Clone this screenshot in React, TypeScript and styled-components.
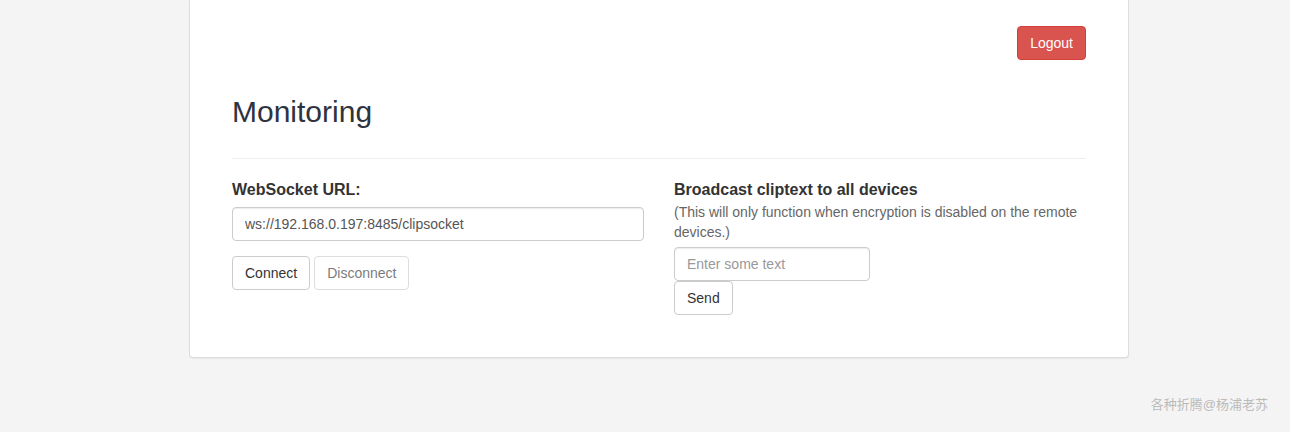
import React from "react";
import styled, { createGlobalStyle } from "styled-components";

const Global = createGlobalStyle`
  html, body { margin: 0; padding: 0; }
  body {
    background: #f4f4f4;
    font-family: "Liberation Sans", Arial, "Noto Sans CJK SC", sans-serif;
    font-size: 14px;
    line-height: 1.42857;
    color: #333;
  }
  * { box-sizing: border-box; }
`;

const Page = styled.div`
  display: flex;
  flex-direction: column;
  min-height: 432px;
`;

const Panel = styled.div`
  margin-left: 189px;
  width: 940px;
  background: #fff;
  border: 1px solid #ddd;
  border-top: none;
  border-radius: 0 0 4px 4px;
  box-shadow: 0 1px 1px rgba(0, 0, 0, 0.05);
  padding: 26px 42px 42px;
`;

const TopBar = styled.div`
  display: flex;
  justify-content: flex-end;
`;

const Title = styled.h2`
  margin: 35px 0 30px;
  font-size: 30px;
  font-weight: 400;
  line-height: 1.1;
  color: #2f3340;
`;

const Rule = styled.hr`
  margin: 20px 0;
  border: 0;
  border-top: 1px solid #eee;
`;

const Columns = styled.div`
  display: grid;
  grid-template-columns: 1fr 1fr;
  column-gap: 30px;
`;

const Column = styled.div`
  display: flex;
  flex-direction: column;
  align-items: flex-start;
`;

const Label = styled.label`
  font-size: 16px;
  font-weight: 700;
  line-height: 22.86px;
  margin-bottom: 5px;
`;

const Note = styled.p`
  margin: -5px 0 5px;
  line-height: 20px;
  color: #666;
`;

const Input = styled.input<{ $full?: boolean }>`
  display: block;
  width: ${(p) => (p.$full ? "100%" : "196px")};
  height: 34px;
  padding: 6px 12px;
  font: inherit;
  font-size: 14px;
  color: #555;
  background: #fff;
  border: 1px solid #ccc;
  border-radius: 4px;
  box-shadow: inset 0 1px 1px rgba(0, 0, 0, 0.075);
  outline: none;
  &::placeholder { color: #999; }
`;

const ButtonRow = styled.div<{ $top: number }>`
  display: flex;
  gap: 4px;
  margin-top: ${(p) => p.$top}px;
`;

const Button = styled.button<{ $variant?: "danger" | "default" }>`
  display: inline-block;
  height: 34px;
  padding: 6px 12px;
  font: inherit;
  font-size: 14px;
  line-height: 20px;
  border-radius: 4px;
  cursor: pointer;
  color: ${(p) => (p.$variant === "danger" ? "#fff" : "#333")};
  background: ${(p) => (p.$variant === "danger" ? "#d9534f" : "#fff")};
  border: 1px solid ${(p) => (p.$variant === "danger" ? "#d43f3a" : "#ccc")};
  &:disabled {
    opacity: 0.65;
    cursor: not-allowed;
  }
`;

const Footer = styled.div`
  display: flex;
  justify-content: flex-end;
  padding: 38px 22px 0 0;
  font-size: 13px;
  line-height: 18px;
  color: #bbb;
`;

export default function App() {
  return (
    <Page>
      <Global />
      <Panel>
        <TopBar>
          <Button $variant="danger">Logout</Button>
        </TopBar>
        <Title>Monitoring</Title>
        <Rule />
        <Columns>
          <Column>
            <Label>WebSocket URL:</Label>
            <Input $full defaultValue="ws://192.168.0.197:8485/clipsocket" />
            <ButtonRow $top={15}>
              <Button>Connect</Button>
              <Button disabled>Disconnect</Button>
            </ButtonRow>
          </Column>
          <Column>
            <Label>Broadcast cliptext to all devices</Label>
            <Note>
              (This will only function when encryption is disabled on the remote devices.)
            </Note>
            <Input placeholder="Enter some text" />
            <ButtonRow $top={0}>
              <Button>Send</Button>
            </ButtonRow>
          </Column>
        </Columns>
      </Panel>
      <Footer>各种折腾@杨浦老苏</Footer>
    </Page>
  );
}
